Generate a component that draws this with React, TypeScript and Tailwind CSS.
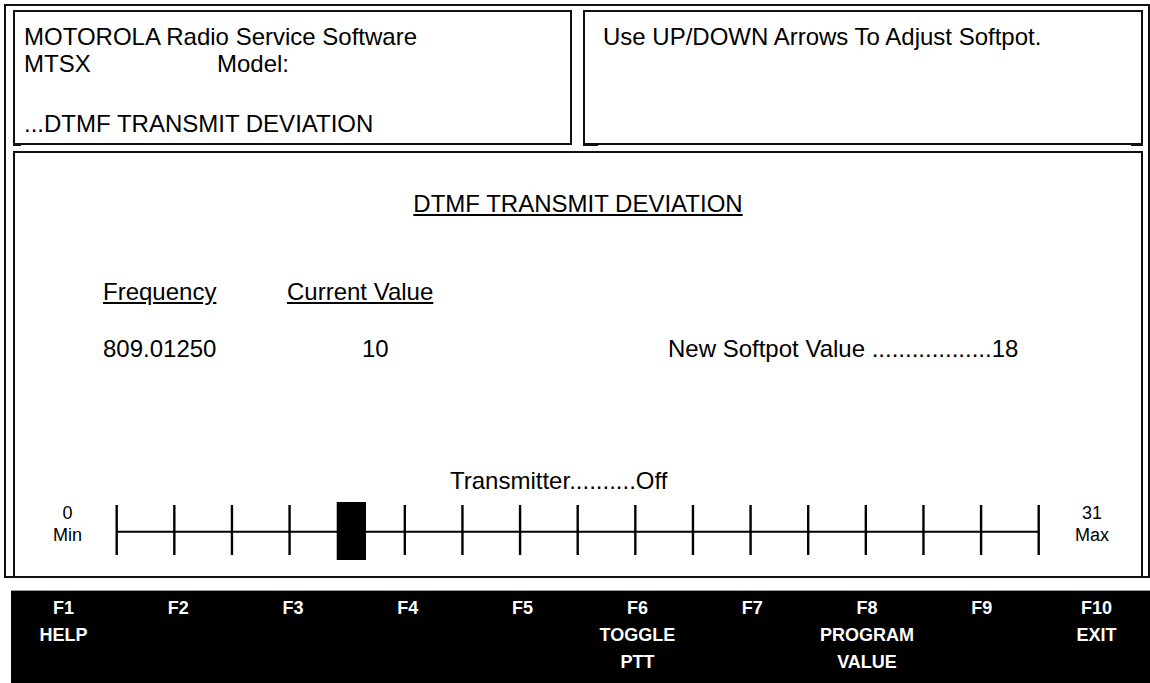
import React from 'react';

const keys = [
  { k: 'F1', lines: ['HELP'] },
  { k: 'F2', lines: [] },
  { k: 'F3', lines: [] },
  { k: 'F4', lines: [] },
  { k: 'F5', lines: [] },
  { k: 'F6', lines: ['TOGGLE', 'PTT'] },
  { k: 'F7', lines: [] },
  { k: 'F8', lines: ['PROGRAM', 'VALUE'] },
  { k: 'F9', lines: [] },
  { k: 'F10', lines: ['EXIT'] },
];

const TICKS = 17;

function Slider({ pos }: { pos: number }) {
  // tick spacing follows the screen: 0..31 range drawn as 16 steps
  const start = 6.7;
  const step = 57.625;
  return (
    <svg width="940" height="58" viewBox="0 0 940 58" className="block">
      <line x1={start} y1="29.7" x2={start + step * (TICKS - 1)} y2="29.7" stroke="#000" strokeWidth="2" />
      {Array.from({ length: TICKS }, (_, i) => (
        <line key={i} x1={start + i * step} y1="3" x2={start + i * step} y2="53" stroke="#000" strokeWidth="2.4" />
      ))}
      <rect x={start + pos * step - 10.5} y="0" width="29.3" height="58" fill="#000" />
    </svg>
  );
}

export default function App() {
  return (
    <div className="flex flex-col w-[1150px] h-[683px] overflow-hidden bg-white text-black font-['Liberation_Sans',Arial,sans-serif]">
      <div className="ml-[4px] mt-[4px] w-[1146px] h-[574px] border-2 border-[#111] flex flex-col pl-[7px] pr-[5px] pt-[4px]">
        <div className="flex gap-[11px] h-[135px]">
          <div className="relative w-[559px] border-2 border-[#111] pl-[9px] pt-[11px] text-[24px] leading-[27px]">
            <div>MOTOROLA Radio Service Software</div>
            <div className="flex">
              <span className="w-[193px]">MTSX</span>
              <span>Model:</span>
            </div>
            <div className="mt-[33px]">...DTMF TRANSMIT DEVIATION</div>
            <div className="absolute -bottom-[3px] -left-[2px] h-px w-[8px] bg-[#111]" />
          </div>
          <div className="relative flex-1 border-2 border-[#111] pl-[18px] pt-[11px] text-[24px] leading-[27px]">
            Use UP/DOWN Arrows To Adjust Softpot.
            <div className="absolute -bottom-[3px] -left-[2px] h-px w-[15px] bg-[#111]" />
            <div className="absolute -bottom-[3px] -right-[2px] h-px w-[12px] bg-[#111]" />
          </div>
        </div>

        <div className="mt-[6px] flex-1 border-2 border-b-0 border-[#111] flex flex-col text-[24px] leading-[28px]">
          <div className="mt-[37px] text-center">
            <span className="underline">DTMF TRANSMIT DEVIATION</span>
          </div>

          <div className="mt-[60px] flex pl-[88px]">
            <span className="w-[184px] underline">Frequency</span>
            <span className="underline">Current Value</span>
          </div>

          <div className="mt-[29px] flex pl-[88px]">
            <span className="w-[259px]">809.01250</span>
            <span className="w-[306px]">10</span>
            <span>New Softpot Value ..................18</span>
          </div>

          <div className="mt-[104px] pl-[435px]">Transmitter..........Off</div>

          <div className="mt-[7px] flex h-[58px]">
            <div className="w-[95px] pl-[10px] text-center text-[18px] leading-[22px]">
              <div>0</div>
              <div>Min</div>
            </div>
            <Slider pos={4} />
            <div className="flex-1 pr-[7px] text-center text-[18px] leading-[22px]">
              <div>31</div>
              <div>Max</div>
            </div>
          </div>
        </div>
      </div>

      <div className="mt-[12px] ml-[11px] flex-1 bg-black border-t border-[#9a9a9a] overflow-hidden">
        <div className="-ml-[5px] w-[1148px] grid grid-cols-10 pt-[4px] text-white font-bold text-[18px] leading-[27px] text-center">
          {keys.map((f) => (
            <div key={f.k}>
              <div>{f.k}</div>
              {f.lines.map((l) => (
                <div key={l}>{l}</div>
              ))}
            </div>
          ))}
        </div>
      </div>
    </div>
  );
}
